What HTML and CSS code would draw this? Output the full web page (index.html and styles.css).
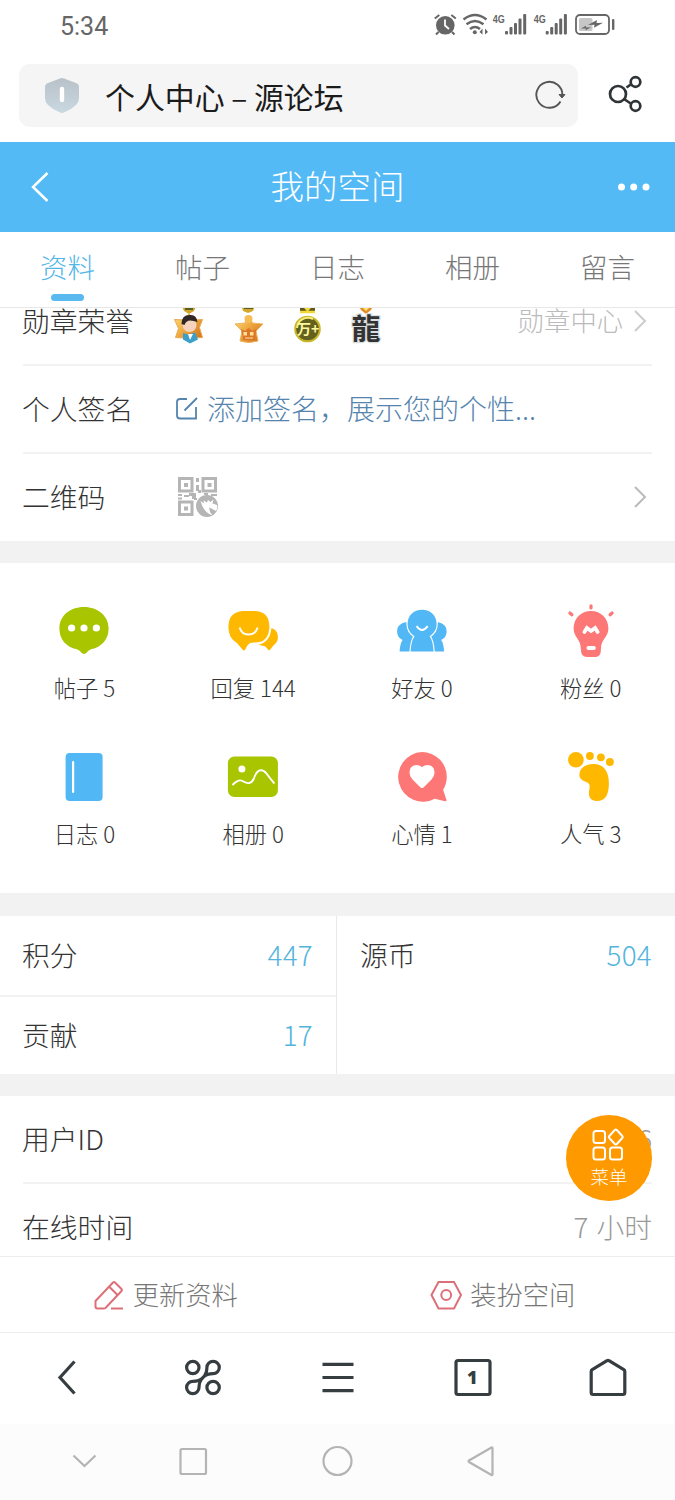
FILE: index.html
```html
<!DOCTYPE html>
<html lang="zh-CN">
<head>
<meta charset="utf-8">
<title>个人中心 – 源论坛</title>
<link rel="stylesheet" href="styles.css">
</head>
<body>
<div class="screen">
  <header class="status">
    <span class="clock">5:34</span>
    <svg class="status-icons" viewBox="430 10 190 28" fill="#666" stroke="none">
      <circle cx="445.300" cy="25.300" r="9.300"/>
      <path d="M434.800 18.500l4.500-3.500M455.800 18.500l-4.500-3.500M438.500 32l-2.500 2.500M452 32l2.500 2.500" stroke="#666" stroke-width="2"/>
      <path d="M445 19.500v6l4 3.500" fill="none" stroke="#fff" stroke-width="1.800"/>
      <g fill="none" stroke="#666" stroke-width="2.400">
        <path d="M463.500 19.500q11.500-9 23 0M466.500 24.300q8.500-6.500 17 0M470 29q5-4 10 0"/>
      </g>
      <circle cx="474.800" cy="32.300" r="2"/>
      <path d="M479.500 32l3-3.500v6zM488 32l-3-3.500v6z"/>
      <g id="bars"><rect x="505" y="31" width="3" height="3.500" rx="1"/><rect x="509.500" y="27" width="3" height="7.500" rx="1"/><rect x="514" y="23" width="3" height="11.500" rx="1"/><rect x="518.500" y="18.500" width="3" height="16" rx="1"/><rect x="523.200" y="14" width="3" height="20.500" rx="1"/></g>
      <use href="#bars" x="40.700"/>
      <text class="net" x="492.800" y="22.500" textLength="12" lengthAdjust="spacingAndGlyphs">4G</text>
      <text class="net" x="533.700" y="22.500" textLength="12" lengthAdjust="spacingAndGlyphs">4G</text>
      <rect x="576" y="15" width="33" height="19" rx="4" fill="none" stroke="#666" stroke-width="1.800"/>
      <rect x="579" y="18" width="13.500" height="13" rx="1.500" fill="#c6c6c6"/>
      <path d="M588 25l9-5-.5 3 6.500-.3-9 5 .5-3zM581 28.500l5-2.800v1.800l5-.2-5.500 3 .3-1.800z"/>
      <rect x="612" y="19" width="2.400" height="11" rx="1"/>
    </svg>
  </header>

  <div class="address">
    <div class="url">
      <svg class="shield" viewBox="44 76 36 37">
        <defs><linearGradient id="sh" x1="0" y1="0" x2="0" y2="1"><stop offset="0" stop-color="#b9c1c8"/><stop offset="1" stop-color="#c9d8e1"/></linearGradient></defs>
        <path d="M60 77.500q2-.8 4 0l12 4.500q3 1 3 4v11q0 4-3 7-5 5-12 7.500-2 .8-4 0-7-2.500-12-7.500-3-3-3-7v-11q0-3 3-4z" fill="url(#sh)"/>
        <path d="M62 88v11" stroke="#fff" stroke-width="4.400" stroke-linecap="round"/>
      </svg>
      <span class="url-title">个人中心 – 源论坛</span>
      <svg class="reload" viewBox="533 80 34 30" fill="none" stroke="#555" stroke-width="1.900"><path d="M560.500 101.500A13 13 0 1 1 562.300 96"/><path d="M559 94.500h6l-3 3.500z" fill="#555" stroke-width="1"/></svg>
    </div>
    <svg class="share" viewBox="607 74 37 40" fill="none" stroke="#2f3437" stroke-width="2.700"><circle cx="618" cy="94" r="8"/><circle cx="635.500" cy="82" r="4.800"/><circle cx="635.500" cy="106" r="4.800"/><path d="M626.500 87.500l5-3.500M624 99l7.500 5"/></svg>
  </div>

  <div class="titlebar">
    <svg class="back" viewBox="30 170 20 34" fill="none" stroke="#fff" stroke-width="2.500"><path d="M47.500 173L33 187l14.500 14"/></svg>
    <h1>我的空间</h1>
    <svg class="more" viewBox="616 180 36 14" fill="#fff"><circle cx="621.500" cy="187" r="3.500"/><circle cx="633.700" cy="187" r="3.500"/><circle cx="646" cy="187" r="3.500"/></svg>
  </div>

  <nav class="tabs">
    <a class="active">资料</a><a>帖子</a><a>日志</a><a>相册</a><a>留言</a>
  </nav>

  <main class="content">
    <section class="info">
      <div class="row medals-row">
        <span class="label">勋章荣誉</span>
        <svg class="medals" viewBox="170 297 220 50">
          <defs>
            <linearGradient id="gold" x1="0" y1="0" x2="1" y2="1"><stop offset="0" stop-color="#ffe27a"/><stop offset=".5" stop-color="#eca33c"/><stop offset="1" stop-color="#c66a18"/></linearGradient>
          </defs>
          <path d="M180 303h18l-4 9-5 3-5-3zM240 303h17l-4 9-5 2-5-2z" fill="#d3a72d"/>
          <path d="M185 306h8v5h-8zM244 306h9v4h-9z" fill="#59601d"/>
          <path d="M189 315l4.500 6 9-.5-3 8 3 10-8 .5-5.500 4-5.500-4-8-.5 3-9-4-9 10 .5z" fill="url(#gold)" stroke="#e9a94d"/>
          <circle cx="189.500" cy="326" r="7" fill="#f6d3bd"/>
          <path d="M181.500 325q0-9 8-9 7-1 8 7l-4-1q-7-2-9 4z" fill="#302825"/>
          <path d="M183 334l5 1.500 7-2 3 7-8 4-7-4z" fill="#3c9fc9"/><path d="M188 335l2 6 3-6z" fill="#fff"/>
          <path d="M248.500 316l4 8 10.500 1-7 7 2 10q-9 3-18 0l2-10-7-7 10-1z" fill="url(#gold)" stroke="#f1b35d"/>
          <circle cx="248.500" cy="320" r="4" fill="#f5bd54"/>
          <path d="M241 330l4 2 3.500-3 4 3 4-2-2 11h-11z" fill="#dc7628"/><path d="M243.500 333h3.500v3.500h-3.500zM250 333h3.500v3.500H250z" fill="#ffe294"/><path d="M245 339h8" stroke="#ffe294"/>
          <path d="M300 306h15v7h-15z" fill="#5d5822"/><path d="M303 306l4.500 5 4.500-5M300 313h15" stroke="#f2d936" stroke-width="2.500" fill="none"/>
          <circle cx="307.500" cy="330" r="12.300" fill="#64611f" stroke="#c6b72a" stroke-width="2"/><path d="M297 329a11 11 0 0 1 16-9" fill="none" stroke="#f6ed7b" stroke-width="2"/>
          <text class="wan" x="297" y="335">万+</text>
          <path d="M357 303h18l-4 8-5 4-5-4z" fill="#e28d25"/><path d="M361 307h10l-5 5z" fill="#ffe17a"/>
          <text class="dragon" x="351.500" y="341">龍</text>
        </svg>
        <span class="link-more">勋章中心</span>
        <svg class="chev pale" viewBox="0 0 14 24"><path d="M2 2l10 10L2 22"/></svg>
      </div>
      <div class="row">
        <span class="label">个人签名</span>
        <svg class="edit" viewBox="175 396 24 25" fill="none" stroke="#5584ae" stroke-width="1.800"><path d="M187 399h-7q-3 0-3 3v13.500q0 3 3 3h16v-11.500M184.500 410.500L197 398"/></svg>
        <span class="sign">添加签名，展示您的个性...</span>
      </div>
      <div class="row">
        <span class="label">二维码</span>
        <svg class="qr" viewBox="177 476 42 42" fill="none" stroke="#b5b5b5" stroke-width="3"><path d="M179.500 478.500h12.500v12.500h-12.500zM203 478.500h12.500v12.500H203zM179.500 502h12.500v12.500h-12.500z"/><g fill="#b5b5b5" stroke="none"><path d="M184 483h4v4h-4zM207.500 483h4v4h-4zM184 506.500h4v4h-4zM196 478h3v4h-3zM196 485h3v6h-3zM178 494h4v2h-4zM184 495h5v2h-5zM189 493h7v3h-7zM178 497.500h4v2h-4zM192 496h4v3h-4zM198 490h3v3h-3zM194 498h3v2h-3zM204 493h4v2h-4zM211 494h6v2h-6z"/><circle cx="207" cy="506" r="11"/></g><path d="M200.500 501l3.500 2.500-.5-3 3.500 2 1-2.500 2.500 2 3-2.500-1 4 4.500 1.500q1 3-1 6l-6.500-3.500q-1 4 3 8-9-3-12-14.500z" fill="#fff" stroke="none"/></svg>
        <svg class="chev" viewBox="0 0 14 24"><path d="M2 2l10 10L2 22"/></svg>
      </div>
    </section>

    <section class="stats">
      <div class="stat"><svg viewBox="54.400 601 60 60"><path d="M84.400 607c14 0 24.600 9 24.600 21.500 0 11-7 18.500-17.500 20.800-3 .7-4.500 4.700-7.100 4.700s-4-4-7.100-4.700C66.500 647 59.800 639.500 59.800 628.500 59.800 616 70 607 84.400 607z" fill="#a8c500"/><g fill="#fff"><circle cx="72" cy="628" r="3.600"/><circle cx="84.400" cy="628" r="3.600"/><circle cx="96.800" cy="628" r="3.600"/></g></svg><span>帖子 5</span></div>
      <div class="stat"><svg viewBox="223.100 601 60 60"><path d="M267 627.500q11 0 11 10 0 4.500-4.500 8l-3.500 4.500q-1 .5-1.500 0l-3-3.500-8-2q8-6 9-17z" fill="#ffb800"/><path d="M243 611h13q13.500 1 13.500 16 0 15.500-15 15.500-5.500 0-7 3l-2.500 4.500q-1 .8-2 0l-6-7q-8.500-5-8.500-16 0-15 14.500-16z" fill="#ffb800"/><path d="M270.500 628q-1 13.500-12.500 16" fill="none" stroke="#fff" stroke-width="2"/><path d="M239.700 627.500q2 7 9 7t9-7" fill="none" stroke="#fff" stroke-width="2"/></svg><span>回复 144</span></div>
      <div class="stat"><svg viewBox="391.900 601 60 60" fill="#52b8f5"><path d="M410 622q-13 0-13 9.500 0 6 5.500 8.500-2.500 3-3 11.500H444q-.5-8.500-3-11.500 5.500-2.500 5.500-8.500 0-9.500-13-9.500z"/><path d="M422 609.800c8.500 0 14.500 6 14.500 14 0 6-3 10-7 12.500 3 4 3.500 9.200 4 15.200H410.500c.5-6 1-11.200 4-15.200-4-2.500-7-6.500-7-12.500 0-8 6-14 14.500-14z" stroke="#fff" stroke-width="2.400" paint-order="stroke"/><path d="M416.500 626q2.500 4 5.500 4t5.500-4" fill="none" stroke="#fff" stroke-width="1.900"/></svg><span>好友 0</span></div>
      <div class="stat"><svg viewBox="560.600 601 60 60"><path d="M590.600 611c10 0 17.400 7.500 17.400 17.500 0 9-7.500 10-7.500 21 0 5-2 7.500-6 7.500h-8q-6 0-6-7.500c0-11-7.300-12-7.300-21 0-10 7.400-17.500 17.400-17.500z" fill="#fe7777"/><path d="M590.600 605.800v2.200M569.500 613l2 1.800M611.700 613l-2 1.800" stroke="#fe7777" stroke-width="3.200" stroke-linecap="round"/><path d="M584 632l2.500-4 4.100 3 4.100-3 2.500 4M588 648h5.500" fill="none" stroke="#fff" stroke-width="3.800" stroke-linecap="round"/></svg><span>粉丝 0</span></div>
      <div class="stat"><svg viewBox="54.400 747 60 60"><rect x="66" y="753" width="37" height="48" rx="4" fill="#52b8f5"/><path d="M73.500 762v30" stroke="#fff" stroke-width="2.200" stroke-linecap="round"/></svg><span>日志 0</span></div>
      <div class="stat"><svg viewBox="223.100 747 60 60"><rect x="228" y="756.500" width="50" height="40.500" rx="6.500" fill="#a8c500"/><circle cx="242" cy="769" r="3.500" fill="#fff"/><path d="M232.500 785c4-4 7-6 11-3.500s8 2.500 10.500-3c3-9 8-11 13-4.500q3.500 5 7.500 9.500" fill="none" stroke="#fff" stroke-width="1.900"/></svg><span>相册 0</span></div>
      <div class="stat"><svg viewBox="391.900 747 60 60"><path d="M421.900 752a24.800 24.800 0 0 1 24.800 24.800q0 7-3.700 13l3.300 10q.4 1.700-1.500 1.500l-10-2.500A24.900 24.900 0 1 1 421.900 752z" fill="#fe7777"/><path d="M421.900 767q2.500-2 6-2 6.500.5 6.500 7.500 0 4-3 7l-8 8q-1.500 1.200-3 0l-8-8q-3-3-3-7 0-7 6.500-7.500 3.500 0 6 2z" fill="#fff"/></svg><span>心情 1</span></div>
      <div class="stat"><svg viewBox="560.600 747 60 60" fill="#ffb800"><circle cx="575.500" cy="759.800" r="7.800"/><circle cx="589.500" cy="756" r="3.900"/><circle cx="600.500" cy="757.300" r="3.900"/><circle cx="609.500" cy="762" r="3.900"/><path d="M579 775C579 768 585 764 593 764c10 0 15.500 7 15.500 19 0 11-3 18-12 18-7 0-9-5-7.500-12 1-5-.5-6-4.500-7.500Q579 779 579 775z"/></svg><span>人气 3</span></div>
    </section>

    <section class="points">
      <div class="col">
        <div class="cell"><span>积分</span><b>447</b></div>
        <div class="cell"><span>贡献</span><b>17</b></div>
      </div>
      <div class="col">
        <div class="cell"><span>源币</span><b>504</b></div>
      </div>
    </section>

    <section class="details">
      <div class="row"><span class="label">用户ID</span><span class="value">6</span></div>
      <div class="row"><span class="label">在线时间</span><span class="value">7 小时</span></div>
    </section>

    <a class="fab">
      <svg viewBox="592 1128 36 34" fill="none" stroke="#fff" stroke-width="2"><rect x="594.500" y="1131" width="11.500" height="12" rx="2.500"/><rect x="594.500" y="1147.500" width="11.500" height="12" rx="2.500"/><rect x="611" y="1147.500" width="12" height="12" rx="2.500"/><path d="M615.800 1130q1-1 2 0l5.500 6q1 1 0 2l-5.500 6q-1 1-2 0l-5.500-6q-1-1 0-2z"/></svg>
      <span>菜单</span>
    </a>
  </main>

  <div class="actions">
    <a><svg viewBox="93 1279 32 32" fill="none" stroke="#dc7078" stroke-width="2"><path d="M95.500 1301l17.500-18.500q1-1 2 0l6.500 6.500q1 1 0 2l-16 17q-.8.500-2 .5h-6q-2 0-2-2zM109 1286.500l8.500 8.500M111 1308.500h12"/></svg><span>更新资料</span></a>
    <a><svg viewBox="430 1279 32 32" fill="none" stroke="#dc7078" stroke-width="2"><path d="M438.500 1282h15.500l7 13-7 13.500h-15.500l-7-13.500z"/><circle cx="446.200" cy="1295" r="4.900"/></svg><span>装扮空间</span></a>
  </div>

  <nav class="browser-nav">
    <a><svg viewBox="47.500 1358 40 40"><path d="M74 1361.500L59.500 1377.500l14.500 16"/></svg></a>
    <a><svg viewBox="182.500 1358 40 40"><circle cx="192.300" cy="1367.500" r="6.200"/><circle cx="212.600" cy="1387.500" r="6.200"/><path d="M206.400 1367.500a6.200 6.200 0 1 1 6.200 6.200C206 1373.700 203 1377 202.500 1377.500S199 1381.300 192.300 1381.300a6.200 6.200 0 1 0 6.200 6.200C198.500 1381 202 1378 202.500 1377.500S206.400 1374 206.400 1367.500z"/></svg></a>
    <a><svg viewBox="317.500 1358 40 40"><path d="M322 1364.300h31M322 1377.500h31M322 1390.700h31"/></svg></a>
    <a><svg viewBox="452.500 1358 40 40"><rect x="455.500" y="1360.500" width="34" height="34" rx="2"/><text class="tab-count" x="466.500" y="1384">1</text></svg></a>
    <a><svg viewBox="587.500 1358 40 40"><path d="M590.700 1371.500q0-1.200 1-1.800l14.800-9q1-.7 2 0l14.800 9q1 .6 1 1.800v21q0 2-2 2h-29.600q-2 0-2-2z"/></svg></a>
  </nav>

  <footer class="system-nav">
    <svg viewBox="60 1440 450 42" fill="none" stroke="#b4b4b4" stroke-width="2.200"><path d="M73.500 1455.500l11 10.500 11-10.500"/><rect x="180.500" y="1449" width="25.500" height="25" rx="1.500"/><circle cx="337.500" cy="1461" r="14"/><path d="M491.500 1447.500q1-.5 1 1v25.500q0 1.500-1 1l-22.500-13q-1-.8 0-1.500z"/></svg>
  </footer>
</div>
</body>
</html>
```
FILE: styles.css
```css
* { box-sizing: border-box; }
body { margin: 0; background: #fff; font-family: "Noto Sans CJK SC", sans-serif; font-weight: 300; color: #333; }
svg { display: block; flex: none; }
.screen { width: 675px; height: 1500px; display: flex; flex-direction: column; overflow: hidden; }

.status { height: 64px; display: flex; justify-content: space-between; align-items: flex-start; padding: 10px 55px 0 60px; }
.clock { font: 400 25px/33px Roboto, sans-serif; color: #666; }
.status-icons { width: 190px; height: 28px; }
.net { font: 700 11.5px "Liberation Sans", sans-serif; }

.address { height: 78px; display: flex; align-items: flex-start; padding: 0 31px 0 19px; gap: 29px; }
.url { width: 559px; height: 63px; border-radius: 11px; background: #f5f5f5; display: flex; align-items: center; padding: 0 11px 0 25px; }
.shield { width: 36px; height: 37px; margin-bottom: 1px; }
.url-title { flex: 1; padding-left: 25px; font-size: 29.9px; font-weight: 400; color: #1b1b1b; line-height: 44px; white-space: nowrap; }
.reload { width: 34px; height: 30px; margin-bottom: 1px; }
.share { width: 37px; height: 40px; margin-top: 10px; }

.titlebar { height: 90px; background: #53baf5; display: flex; align-items: center; justify-content: space-between; padding: 0 23px 0 30px; }
.titlebar h1 { margin: 0; font-size: 33.5px; font-weight: 300; color: #fff; padding: 0 0 5px 9px; }
.back { width: 20px; height: 34px; }
.more { width: 36px; height: 14px; }

.tabs { height: 76px; flex: none; display: grid; grid-template-columns: repeat(5, 1fr); border-bottom: 1px solid #e8e8e8; }
.tabs a { text-align: center; font-size: 27.5px; line-height: 69px; color: #777; position: relative; }
.tabs .active { color: #53b6e8; }
.active::after { content: ""; position: absolute; left: 51px; top: 62px; width: 33px; height: 7px; border-radius: 4px; background: #5abaf0; }

.content { height: 948px; flex: none; overflow: hidden; position: relative; }
.row { height: 88px; margin: 0 23px; display: flex; align-items: center; border-bottom: 2px solid #f2f2f2; font-size: 27.8px; white-space: nowrap; }
.info { margin-top: -30px; height: 263px; }
.label { width: 152px; margin-left: -1px; padding-bottom: 3px; }
.label + svg { margin-left: 1px; }
.info .row:last-child { border: 0; padding-bottom: 2px; }
.medals-row .medals { width: 220px; height: 50px; margin-left: -4px; }
.wan { font-size: 14px; font-weight: 700; fill: #fff8a0; }
.dragon { font-size: 29px; font-weight: 700; fill: #333; stroke: #d9dfdf; stroke-width: 2.5; paint-order: stroke; }
.link-more { margin-left: auto; margin-right: 10px; padding-bottom: 3px; font-size: 26.3px; color: #bbb; }
.chev { width: 14px; height: 24px; margin-left: auto; margin-right: 5px; fill: none; stroke: #bbb; stroke-width: 2; }
.pale { margin-left: 0; stroke: #ccc; }
.edit { width: 24px; height: 25px; margin-bottom: 1px; }
.sign { margin-left: 8px; padding-bottom: 3px; font-size: 28px; color: #5584ae; }
.row .qr { width: 42px; height: 42px; margin-left: 3px; }

.stats { height: 375px; border: solid #f2f2f2; border-width: 22px 0 23px; padding-top: 38px; display: grid; grid-template-columns: repeat(4, 1fr); grid-auto-rows: 146px; }
.stat { display: flex; flex-direction: column; align-items: center; font-size: 22.3px; }
.stat svg { width: 60px; height: 60px; }
.stat span { line-height: 34px; margin-top: 9px; }

.points { height: 158px; display: grid; grid-template-columns: 337px 1fr; }
.col + .col { border-left: 1px solid #e9e9e9; margin-left: -1px; }
.cell { height: 79px; display: flex; align-items: center; justify-content: space-between; padding: 0 24px 4px 22px; font-size: 27.8px; }
.cell + .cell { height: 79px; border-top: 2px solid #f2f2f2; }
.col + .col .cell { padding-left: 23px; padding-right: 23px; }
.cell b { font-weight: 300; color: #54b4dc; letter-spacing: .3px; }

.details { border-top: 22px solid #f2f2f2; }
.value { margin-left: auto; padding-bottom: 3px; color: #999; word-spacing: 2px; }

.fab { position: absolute; left: 566px; top: 807px; width: 86px; height: 86px; border-radius: 50%; background: #ff9900; color: #fff; display: flex; flex-direction: column; align-items: center; padding-top: 13px; }
.fab svg { width: 36px; height: 34px; }
.fab span { font-size: 18.5px; line-height: 29px; }

.actions { height: 77px; flex: none; display: grid; grid-template-columns: 1fr 1fr; border: solid #ededed; border-width: 1px 0; }
.actions a { display: flex; align-items: center; justify-content: center; gap: 8px; padding-right: 7px; font-size: 26.3px; color: #777; }
.actions span { padding-bottom: 3px; }
.actions svg { width: 32px; height: 32px; }

.browser-nav { height: 91px; flex: none; display: grid; grid-template-columns: repeat(5, 1fr); align-items: center; justify-items: center; padding-bottom: 2px; }
.browser-nav svg { width: 40px; height: 40px; fill: none; stroke: #363d40; stroke-width: 3.2; }
.browser-nav .tab-count { font: 800 18px "Open Sans", sans-serif; fill: #363d40; stroke: none; }

.system-nav { flex: 1; background: #fcfcfc; display: flex; align-items: flex-start; padding: 16px 60px 0; }
.system-nav svg { width: 450px; height: 42px; }
```
